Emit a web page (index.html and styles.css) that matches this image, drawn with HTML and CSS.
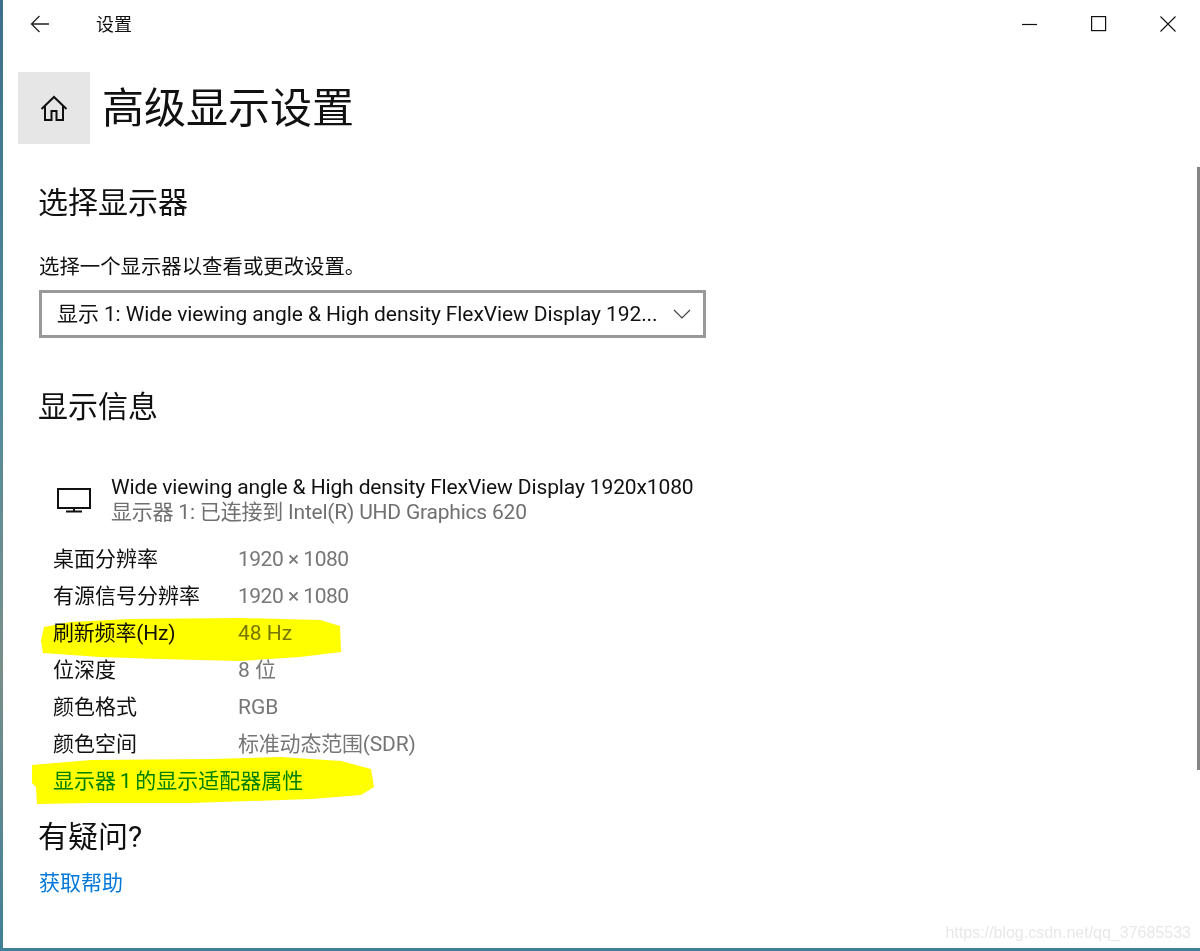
FILE: index.html
```html
<!DOCTYPE html>
<html lang="zh-CN">
<head>
<meta charset="utf-8">
<title>设置</title>
<link rel="stylesheet" href="styles.css">
</head>
<body>
<div class="window">
  <header class="titlebar">
    <div class="titlebar-left">
      <svg class="back" width="20" height="18" viewBox="0 0 20 18"><path d="M9.500 1 1.500 9l8 8M1.500 9H19" fill="none" stroke="#222" stroke-width="1.300"/></svg>
      <span class="app-name">设置</span>
    </div>
    <div class="caption">
      <svg width="16" height="16" viewBox="0 0 16 16"><path d="M0 8.500h15" stroke="#111" stroke-width="1.200"/></svg>
      <svg width="16" height="16" viewBox="0 0 16 16"><rect x=".6" y=".6" width="14" height="14" fill="none" stroke="#111" stroke-width="1.200"/></svg>
      <svg width="16" height="16" viewBox="0 0 16 16"><path d="M.5.5l15 15M15.500.5l-15 15" stroke="#111" stroke-width="1.100"/></svg>
    </div>
  </header>

  <div class="page-head">
    <div class="home">
      <svg width="28" height="27" viewBox="0 0 28 27"><path d="M1.500 14 14 2l12.500 12M5 11v14h6.500v-9h5v9H23V11" fill="none" stroke="#111" stroke-width="2"/></svg>
    </div>
    <h1>高级显示设置</h1>
  </div>

  <main class="content">
    <h2 class="first">选择显示器</h2>
    <p class="hint">选择一个显示器以查看或更改设置。</p>
    <div class="select">
      <span class="select-text">显示 1: Wide viewing angle &amp; High density FlexView Display 192...</span>
      <svg class="chevron" width="18" height="10" viewBox="0 0 18 10"><path d="M1 1l8 8 8-8" fill="none" stroke="#444" stroke-width="1.200"/></svg>
    </div>

    <h2 class="info">显示信息</h2>
    <div class="monitor">
      <svg class="monitor-icon" width="36" height="26" viewBox="0 0 36 26"><path d="M2 2h32v19H2zM18 21v4M10 24.500h16" fill="none" stroke="#111" stroke-width="2"/></svg>
      <div class="monitor-text">
        <div class="monitor-name">Wide viewing angle &amp; High density FlexView Display 1920x1080</div>
        <div class="monitor-sub">显示器 1: 已连接到 Intel(R) UHD Graphics 620</div>
      </div>
    </div>

    <div class="specs">
      <svg class="mark mark-a" width="302" height="46" viewBox="0 0 302 46"><path d="M4 10 30 5 90 2 200 1 280 3 300 9 301 35 260 40 200 44 120 42 60 40 3 36 1 24z" fill="#ff0"/></svg>
      <svg class="mark mark-b" width="344" height="48" viewBox="0 0 344 48"><path d="M1 8 60 3 180 2 250 0 310 4 340 12 343 30 330 38 280 42 160 46 60 46 6 47 5 30 1 26z" fill="#ff0"/></svg>
      <div class="spec"><span>桌面分辨率</span><span class="val num">1920 × 1080</span></div>
      <div class="spec"><span>有源信号分辨率</span><span class="val num">1920 × 1080</span></div>
      <div class="spec"><span class="tight">刷新频率(Hz)</span><span class="val">48 Hz</span></div>
      <div class="spec"><span>位深度</span><span class="val">8 位</span></div>
      <div class="spec"><span>颜色格式</span><span class="val">RGB</span></div>
      <div class="spec"><span>颜色空间</span><span class="val tight">标准动态范围(SDR)</span></div>
      <div class="spec"><a class="adapter" href="#">显示器 1 的显示适配器属性</a></div>
    </div>

    <h2 class="question">有疑问?</h2>
    <a class="help" href="#">获取帮助</a>
  </main>

  <div class="scrollbar"></div>
  <div class="watermark">https://blog.csdn.net/qq_37685533</div>
</div>
</body>
</html>
```

FILE: styles.css
```css
* { box-sizing: border-box; }
html, body { margin: 0; height: 951px; overflow: hidden; }
body {
  background: linear-gradient(180deg, #3d6f8c 0%, #4f8a9c 40%, #7a8f8a 70%, #3f7f98 100%);
  padding: 0 0 3px 3px;
  font-family: Roboto, "Noto Sans CJK SC", sans-serif;
  font-size: 21px;
  color: #111;
}
.window { position: relative; height: 948px; background: #fff; overflow: hidden; }

.titlebar { display: flex; justify-content: space-between; height: 50px; padding: 0 24px 0 27px; align-items: center; }
.titlebar-left { display: flex; align-items: center; gap: 46px; }
.back { display: block; margin-top: -3px; }
.app-name { font-size: 18px; line-height: 24px; }
.caption { display: flex; gap: 53px; margin-top: -2px; }

.page-head { display: flex; align-items: center; gap: 12px; margin: 22px 0 0 15px; }
.home { width: 72px; height: 72px; background: #e6e6e6; display: flex; align-items: center; justify-content: center; }
h1 { margin: 2px 0 0; font-size: 42px; font-weight: 400; line-height: 70px; color: #111; }

.content { padding-left: 36px; }
h2 { margin: 0 0 0 -1px; font-size: 30px; font-weight: 400; line-height: 40px; }
h2.first { margin-top: 39px; }
.hint { margin: 29px 0 0; font-size: 20.400px; line-height: 30px; }
.select {
  width: 667px; height: 48px; margin-top: 8px; border: 3px solid #999;
  display: flex; align-items: center; justify-content: space-between;
  padding: 0 12px 0 15px;
}
.select-text { white-space: nowrap; line-height: 40px; letter-spacing: -0.1px; }
.chevron { flex: none; }
h2.info { margin-top: 49px; }

.monitor { display: flex; align-items: flex-start; margin: 46px 0 0 17px; gap: 19px; }
.monitor-icon { margin-top: 14px; display: block; }
.monitor-name { line-height: 28px; letter-spacing: -0.13px; }
.monitor-sub { color: #707070; line-height: 22px; letter-spacing: -0.21px; }

.specs { position: relative; padding-left: 14px; margin-top: 18px; }
.spec { position: relative; display: grid; grid-template-columns: 185px 1fr; height: 37px; align-items: center; line-height: 37px; mix-blend-mode: multiply; }
.val { color: #767676; }
.num { letter-spacing: -0.5px; }
.tight { letter-spacing: -0.2px; }
.adapter { color: #008000; text-decoration: none; white-space: nowrap; grid-column: 1 / 3; word-spacing: -1.500px; }
.mark { position: absolute; display: block; }
.mark-a { left: 1px; top: 76px; }
.mark-b { left: -8px; top: 216px; }

h2.question { margin-top: 17px; }
.help { display: block; margin-top: 12px; color: #0078d7; text-decoration: none; line-height: 28px; width: max-content; }

.scrollbar { position: absolute; right: 0; top: 167px; width: 3px; height: 603px; background: #858585; }
.watermark { position: absolute; right: 9px; bottom: 4px; font-size: 16px; line-height: 22px; color: #e8e8e8; font-family: "Liberation Sans", sans-serif; }
```
